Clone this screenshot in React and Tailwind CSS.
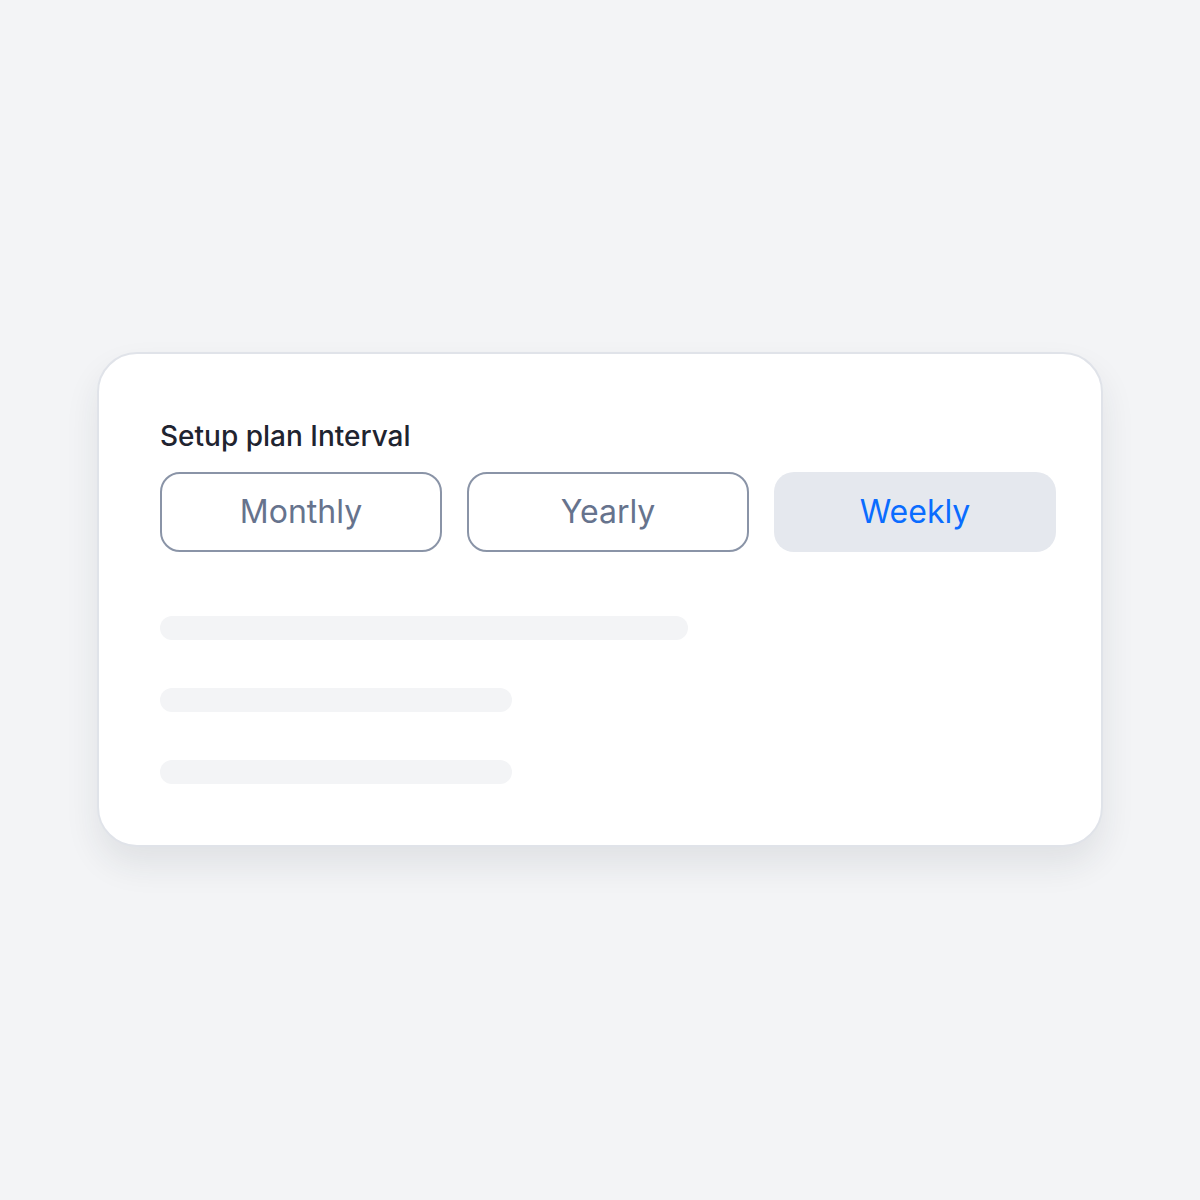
export default function App() {
  const options = ["Monthly", "Yearly", "Weekly"];
  const selected = "Weekly";

  return (
    <div
      className="min-h-screen w-full bg-[#f3f4f6] flex flex-col items-center pt-[352px]"
      style={{ fontFamily: "Inter, 'Noto Sans', sans-serif" }}
    >
      <div className="w-[1006px] h-[495px] bg-white border-2 border-[#e0e3e9] rounded-[40px] pl-[61px] pr-[45px] pt-[64px] shadow-[0_18px_34px_rgba(30,41,59,0.09)]">
        <p className="text-[28px] leading-[36px] font-medium text-[#1f2430]">
          Setup plan Interval
        </p>

        <div className="grid grid-cols-3 gap-[25px] mt-[18px]">
          {options.map((opt) =>
            opt === selected ? (
              <button
                key={opt}
                className="h-[80px] rounded-[20px] bg-[#e5e8ee] text-[32px] text-[#0a6cff]"
              >
                {opt}
              </button>
            ) : (
              <button
                key={opt}
                className="h-[80px] rounded-[20px] border-2 border-[#8a94a7] bg-white text-[32px] text-[#66738d]"
              >
                {opt}
              </button>
            )
          )}
        </div>

        {/* loading placeholders */}
        <div className="flex flex-col gap-[48px] mt-[64px]">
          <div className="h-[24px] w-[528px] rounded-full bg-[#f3f4f6]" />
          <div className="h-[24px] w-[352px] rounded-full bg-[#f3f4f6]" />
          <div className="h-[24px] w-[352px] rounded-full bg-[#f3f4f6]" />
        </div>
      </div>
    </div>
  );
}
